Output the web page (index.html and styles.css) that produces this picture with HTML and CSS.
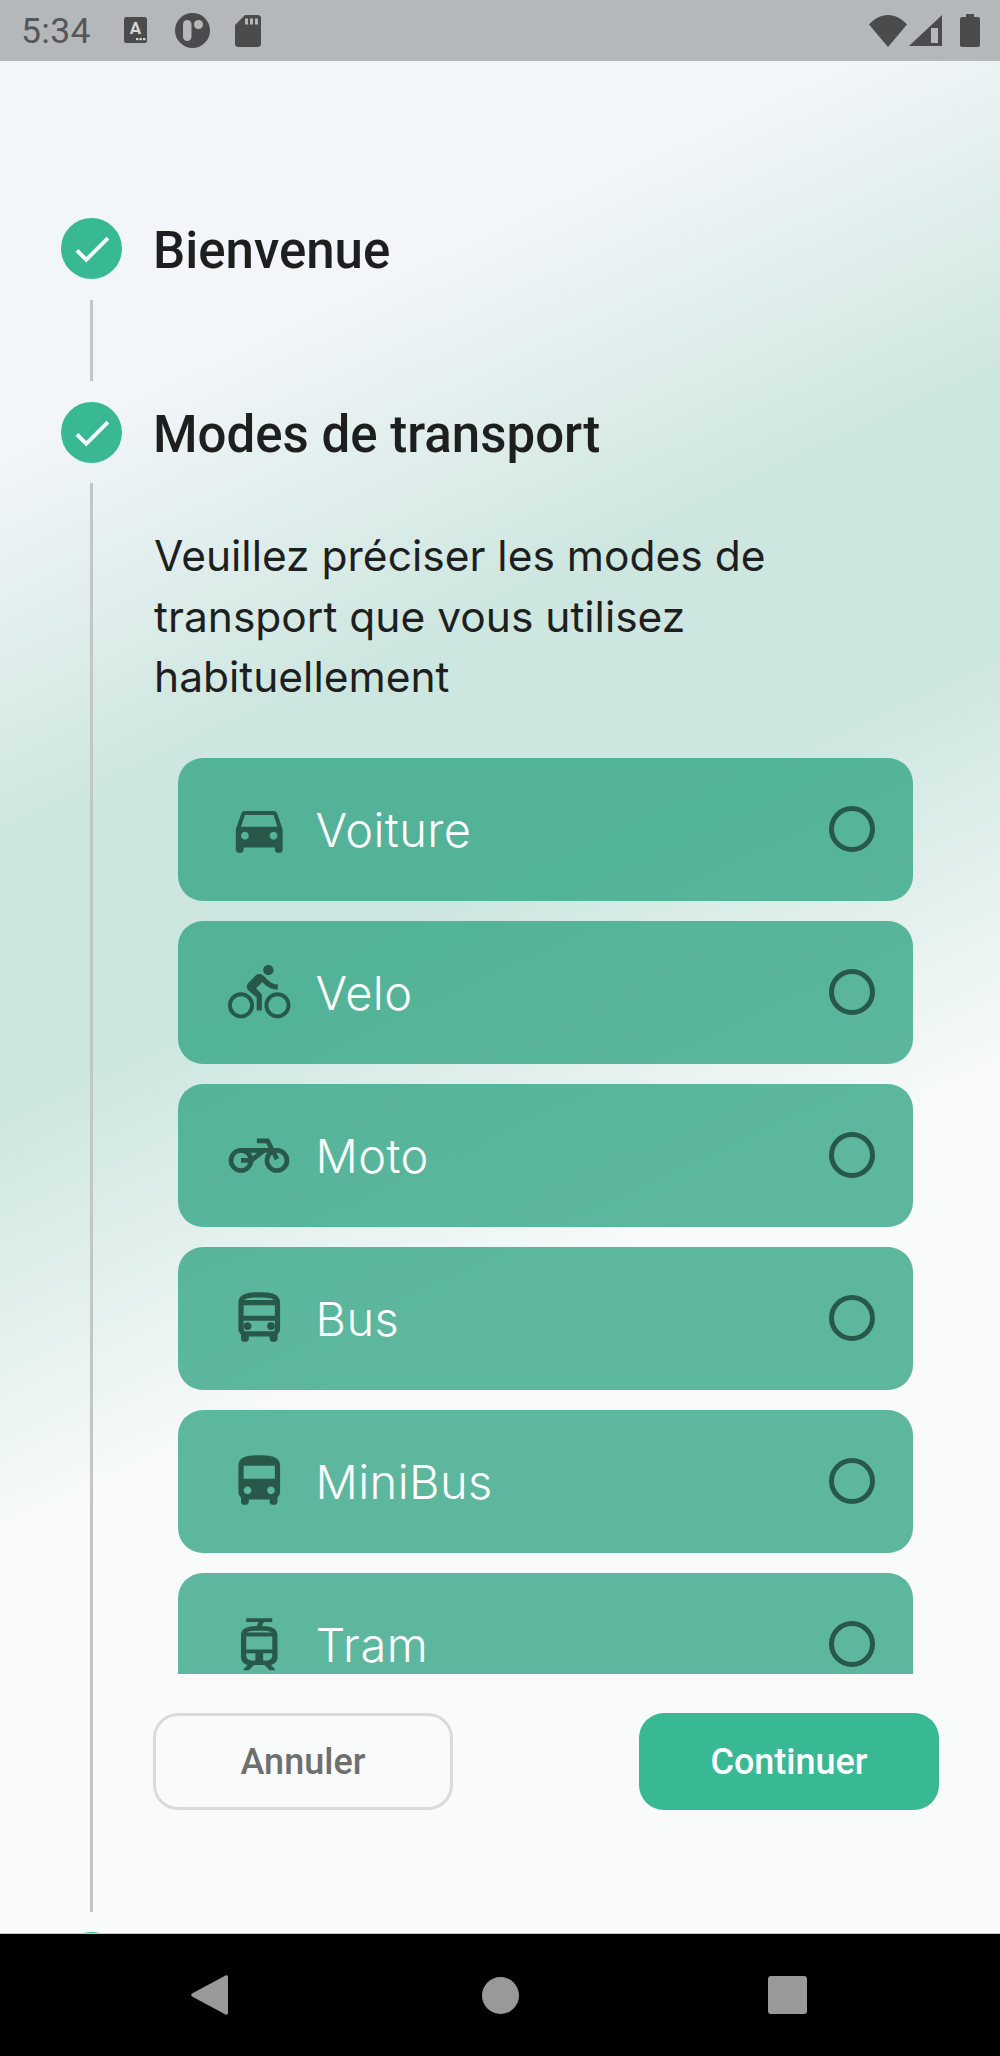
FILE: index.html
```html
<!DOCTYPE html>
<html lang="fr">
<head>
<meta charset="utf-8">
<title>Modes de transport</title>
<link rel="stylesheet" href="styles.css">
</head>
<body>
<div class="screen">

    <div class="status">
        <span class="time">5:34</span>
        <svg class="st-a" viewBox="0 0 23 26"><rect width="23" height="26" rx="2.5" fill="#4a4b4d"/><text x="11.5" y="17" text-anchor="middle" class="st-a-letter">A</text><rect x="12" y="21" width="2.4" height="2.2" fill="#d5d6d7"/><rect x="15.5" y="21" width="2.4" height="2.2" fill="#d5d6d7"/><rect x="19" y="21" width="2.4" height="2.2" fill="#d5d6d7"/></svg>
        <svg class="st-p" viewBox="0 0 35 35"><circle cx="17.5" cy="17.5" r="17.5" fill="#4a4b4d"/><rect x="8" y="7" width="8.5" height="21" rx="4.25" fill="#b5b8ba"/><circle cx="23.5" cy="11.5" r="4.5" fill="#b5b8ba"/></svg>
        <svg class="st-sd" viewBox="0 0 26 32"><path fill="#4a4b4d" d="M10 0h13c1.600 0 3 1.400 3 3v26c0 1.600-1.400 3-3 3H3c-1.600 0-3-1.400-3-3V10z"/><rect x="10" y="3.500" width="3" height="6" fill="#b5b8ba"/><rect x="15" y="3.500" width="3" height="6" fill="#b5b8ba"/><rect x="20" y="3.500" width="3" height="6" fill="#b5b8ba"/></svg>
        <span class="status-gap"></span>
        <svg class="st-wifi" viewBox="0 0 38 32"><path fill="#4a4b4d" d="M19 32L0 9.500C5 4 11.500 0 19 0s14 4 19 9.500z"/></svg>
        <svg class="st-signal" viewBox="0 0 33 31"><path fill="#4a4b4d" d="M33 0v31H0z"/><rect x="22" y="13" width="7" height="15" fill="#b5b8ba"/></svg>
        <svg class="st-batt" viewBox="0 0 20 33"><path fill="#4a4b4d" d="M6 0h8v3h4c1.100 0 2 .9 2 2v26c0 1.100-.9 2-2 2H2c-1.100 0-2-.9-2-2V5c0-1.100.9-2 2-2h4z"/></svg>
    </div>

    <div class="main">
        <div class="step-head first">
            <span class="dot"><svg viewBox="0 0 24 24"><path d="M9 16.170L4.830 12l-1.410 1.410L9 19 21 7l-1.410-1.410z"/></svg></span>
            <h2>Bienvenue</h2>
        </div>
        <div class="rail short"></div>

        <div class="step-head">
            <span class="dot"><svg viewBox="0 0 24 24"><path d="M9 16.170L4.830 12l-1.410 1.410L9 19 21 7l-1.410-1.410z"/></svg></span>
            <h2>Modes de transport</h2>
        </div>

        <div class="step-body">
            <div class="rail tall"></div>
            <div class="content">
                <p class="intro">Veuillez préciser les modes de transport que vous utilisez habituellement</p>

                <div class="modes">
                    <div class="mode">
                        <svg class="ico" viewBox="0 0 24 24"><path d="M18.920 6.010C18.720 5.420 18.160 5 17.500 5h-11c-.66 0-1.210.42-1.420 1.010L3 12v8c0 .55.45 1 1 1h1c.55 0 1-.45 1-1v-1h12v1c0 .55.45 1 1 1h1c.55 0 1-.45 1-1v-8l-2.080-5.990zM6.500 16c-.83 0-1.500-.67-1.500-1.500S5.670 13 6.500 13s1.500.67 1.500 1.500S7.330 16 6.500 16zm11 0c-.83 0-1.500-.67-1.500-1.500s.67-1.500 1.500-1.500 1.500.67 1.500 1.500-.67 1.500-1.500 1.500zM5 11l1.500-4.500h11L19 11H5z"/></svg>
                        <span class="label">Voiture</span>
                        <span class="radio"></span>
                    </div>
                    <div class="mode">
                        <svg class="ico" viewBox="0 0 24 24"><path d="M15.500 5.500c1.100 0 2-.9 2-2s-.9-2-2-2-2 .9-2 2 .9 2 2 2zM5 12c-2.800 0-5 2.200-5 5s2.200 5 5 5 5-2.200 5-5-2.200-5-5-5zm0 8.500c-1.900 0-3.500-1.600-3.500-3.500s1.600-3.500 3.500-3.500 3.500 1.600 3.500 3.500-1.600 3.500-3.500 3.500zm5.800-10l2.400-2.400.8.8c1.300 1.300 3 2.100 5.100 2.100V9c-1.500 0-2.700-.6-3.600-1.500l-1.900-1.900c-.5-.4-1-.6-1.600-.6s-1.100.2-1.400.6L7.800 8.400c-.4.4-.6.9-.6 1.400 0 .6.2 1.100.6 1.400L11 14v5h2v-6.200l-2.200-2.300zM19 12c-2.800 0-5 2.200-5 5s2.200 5 5 5 5-2.200 5-5-2.200-5-5-5zm0 8.500c-1.900 0-3.500-1.600-3.500-3.500s1.600-3.500 3.500-3.500 3.500 1.600 3.500 3.500-1.600 3.500-3.500 3.500z"/></svg>
                        <span class="label">Velo</span>
                        <span class="radio"></span>
                    </div>
                    <div class="mode">
                        <svg class="ico ico-line" viewBox="0 0 24 24"><circle cx="5" cy="14" r="3.850"/><circle cx="18.800" cy="14" r="3.850"/><path d="M5 14h3.900l5-3.900M5 10.100h12M11.100 6.500h4.100l3.600 7"/></svg>
                        <span class="label">Moto</span>
                        <span class="radio"></span>
                    </div>
                    <div class="mode">
                        <svg class="ico" viewBox="0 0 24 24"><path fill-rule="evenodd" d="M12 2C8 2 4 2.500 4 6v10c0 .88.39 1.670 1 2.220V20c0 .55.45 1 1 1h1c.55 0 1-.45 1-1v-1h8v1c0 .55.45 1 1 1h1c.55 0 1-.45 1-1v-1.780c.61-.55 1-1.340 1-2.220V6c0-3.500-3.580-4-8-4zm5.700 3H6.300C6.900 4.400 8.400 4 12 4s5.100.4 5.700 1zM6 7h12v4H6zm0 6h12v3c0 1.100-.9 1-1 1H7c-.1 0-1 .1-1-1z"/><circle cx="7.500" cy="15" r="1.500"/><circle cx="16.500" cy="15" r="1.500"/></svg>
                        <span class="label">Bus</span>
                        <span class="radio"></span>
                    </div>
                    <div class="mode">
                        <svg class="ico" viewBox="0 0 24 24"><path d="M4 16c0 .88.39 1.670 1 2.220V20c0 .55.45 1 1 1h1c.55 0 1-.45 1-1v-1h8v1c0 .55.45 1 1 1h1c.55 0 1-.45 1-1v-1.780c.61-.55 1-1.340 1-2.220V6c0-3.500-3.580-4-8-4s-8 .5-8 4v10zm3.500 1c-.83 0-1.500-.67-1.500-1.500S6.670 14 7.500 14s1.500.67 1.500 1.500S8.330 17 7.500 17zm9 0c-.83 0-1.500-.67-1.500-1.500s.67-1.500 1.500-1.500 1.500.67 1.500 1.500-.67 1.500-1.500 1.500zm1.500-6H6V6h12v5z"/></svg>
                        <span class="label">MiniBus</span>
                        <span class="radio"></span>
                    </div>
                    <div class="mode">
                        <svg class="ico" viewBox="0 0 24 24"><path fill-rule="evenodd" d="M13 5l.75-1.500H17V2H7v1.500h4.750L11 5c-3.130.09-6 .73-6 3.500V17c0 1.500 1.110 2.730 2.550 2.950L6 21.500v.5h2l2-2h4l2 2h2v-.5l-1.550-1.550C17.890 19.730 19 18.500 19 17V8.500c0-2.770-2.870-3.410-6-3.500zM7.300 7.500C7.700 7 8.800 6.800 11 6.800h2c2.200 0 3.300.2 3.700.7zM7 9h10v5H7zm0 6.500h3.500v2.700H9c-1.100 0-2-.9-2-1.900zm6.500 0H17v.8c0 1-.9 1.900-2 1.900h-1.500z"/></svg>
                        <span class="label">Tram</span>
                        <span class="radio"></span>
                    </div>
                </div>

                <div class="actions">
                    <button class="btn cancel">Annuler</button>
                    <button class="btn next">Continuer</button>
                </div>
            </div>
        </div>

        <div class="step-head peek">
            <span class="dot"></span>
        </div>
    </div>

    <div class="nav">
        <svg class="nav-back" viewBox="0 0 37 40"><path d="M34.500 .5L1 18.500c-1 .6-1 2.400 0 3l33.500 18c1 .5 2.500 0 2.500-1.500V2c0-1.500-1.500-2-2.500-1.500z"/></svg>
        <span class="nav-home"></span>
        <span class="nav-recent"></span>
    </div>

</div>
</body>
</html>
```

FILE: styles.css
```css
html, body {margin: 0; padding: 0;}
body {font-family: "Roboto", sans-serif; color: #1d1f1f; background: #000;}
h2, p {margin: 0;}

.screen {width: 1000px; height: 2056px; display: flex; flex-direction: column; overflow: hidden;}

/* status bar */
.status {flex: none; height: 61px; background: #b5b8ba; display: flex; align-items: center; padding: 0 20px 0 21px; box-sizing: border-box;}
.time {font-size: 35.500px; color: #55575a; width: 103px; letter-spacing: .3px;}
.status svg {display: block; flex: none;}
.st-a {width: 23px; height: 26px; margin-right: 28px; margin-top: -1px;}
.st-a-letter {font-family: "Roboto", sans-serif; font-size: 17px; font-weight: 700; fill: #d5d6d7;}
.st-p {width: 35px; height: 35px; margin-right: 25px; margin-top: -1px;}
.st-sd {width: 26px; height: 32px; margin-top: 1px;}
.status-gap {flex: 1;}
.st-wifi {width: 38px; height: 32px; margin-right: 2px;}
.st-signal {width: 33px; height: 31px; margin-right: 18px;}
.st-batt {width: 20px; height: 33px;}

/* stepper */
.main {flex: none; height: 1872px; overflow: hidden; background: linear-gradient(155deg, #f2f5f9 17%, #cde6df 33.500%, #cde6df 45%, #f9fbfa 64%);}
.step-head {display: flex; align-items: center; gap: 31px; height: 61px; padding-left: 61px;}
.step-head.first {margin-top: 157px;}
.step-head.peek {margin-top: 20px;}
.dot {flex: none; width: 61px; height: 61px; border-radius: 50%; background: #39b894; display: flex; align-items: center; justify-content: center;}
.dot svg {width: 46px; height: 46px; fill: #fff;}
h2 {font-size: 51px; font-weight: 500; color: #1d1f1f; padding-top: 3px;}

.rail {flex: none; width: 2.5px; margin-left: 90px; background: #c4c6c6;}
.rail.short {height: 81px; margin-top: 21px; margin-bottom: 21px;}
.step-body {display: flex; margin-top: 20px; height: 1429px;}
.content {margin-left: 61.500px; width: 785px;}

.intro {font-family: "Inter", sans-serif; font-size: 42.500px; line-height: 60.500px; color: #1d1f1f; margin-top: 43px; width: 660px;}

/* transport list, clipped at the bottom */
.modes {margin: 50px 0 0 24px; width: 735px; height: 916px; overflow: hidden; display: flex; flex-direction: column; gap: 20px;}
.mode {flex: none; height: 143px; border-radius: 25px; background: rgba(45, 162, 130, .77); display: flex; align-items: center; padding: 0 38px 0 50px; box-sizing: border-box;}
.ico {flex: none; width: 62.500px; height: 62.500px; fill: #28584a; margin-right: 25px;}
.ico-line {fill: none; stroke: #28584a; stroke-width: 1.800;}
.label {flex: 1; font-family: "Inter", sans-serif; font-size: 47px; font-weight: 350; letter-spacing: .4px; color: #fff;}
.radio {flex: none; width: 46px; height: 46px; box-sizing: border-box; border: 5px solid #28584a; border-radius: 50%;}

.actions {display: flex; justify-content: space-between; margin: 39px 0 0 -1px;}
.btn {width: 300px; height: 97px; border-radius: 25px; font-family: "Roboto", sans-serif; font-size: 36px; font-weight: 500; padding: 1px 0 0; box-sizing: border-box;}
.cancel {background: transparent; border: 3px solid #d9dbda; color: #6f6f6f;}
.next {background: #39b894; border: 0; color: #fff;}

/* android nav */
.nav {flex: 1; background: #000; display: flex; align-items: center; padding-left: 191px; border-top: 1px solid #c4c6c6;}
.nav-back {width: 37px; height: 40px; fill: #999; margin-right: 253.500px;}
.nav-home {width: 37px; height: 37px; border-radius: 50%; background: #999; margin-right: 249.500px;}
.nav-recent {width: 39px; height: 38px; border-radius: 3px; background: #999;}
```
